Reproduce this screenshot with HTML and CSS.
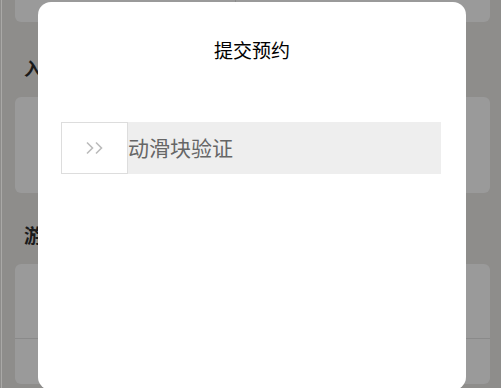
FILE: index.html
```html
<!DOCTYPE html>
<html lang="zh-CN">
<head>
<meta charset="utf-8">
<title>提交预约</title>
<link rel="stylesheet" href="styles.css">
</head>
<body>
<div class="page">
  <div class="card card-top">
    <div class="col"></div>
    <div class="col"></div>
  </div>
  <h2 class="heading heading-first">入</h2>
  <div class="card card-mid"></div>
  <h2 class="heading heading-second">游</h2>
  <div class="card card-bottom">
    <div class="row"></div>
    <div class="row"></div>
  </div>
</div>
<div class="edge-line"></div>
<div class="overlay">
  <div class="modal">
    <div class="modal-title">提交预约</div>
    <div class="slider">
      <div class="handle">
        <svg class="chevrons" width="20" height="14" viewBox="0 0 20 14">
          <path d="M2 1.5 L7.5 7 L2 12.5" fill="none" stroke="#bbbbbb" stroke-width="1.6"/>
          <path d="M11 1.5 L16.5 7 L11 12.5" fill="none" stroke="#bbbbbb" stroke-width="1.6"/>
        </svg>
      </div>
      <div class="slider-text">动滑块验证</div>
    </div>
  </div>
</div>
</body>
</html>
```
FILE: styles.css
```css
html, body {
  margin: 0;
  padding: 0;
  height: 100%;
  overflow: hidden;
}
body {
  background: #8e8d8b;
  font-family: "Noto Sans CJK SC", "Noto Sans", sans-serif;
}
.page {
  padding: 0 11px 0 15px;
}
.card {
  background: #9a9a9a;
  border-radius: 6px;
}
.card-top {
  margin-top: -40px;
  height: 62px;
  display: grid;
  grid-template-columns: 221px 1fr;
}
.card-top .col:first-child {
  border-right: 1px solid #8a8a8a;
  height: 42px;
}
.heading {
  margin: 0;
  padding-left: 9px;
  font-size: 18px;
  font-weight: 700;
  color: #1a1a1a;
  line-height: 26px;
}
.heading-first {
  margin-top: 33px;
}
.card-mid {
  margin-top: 16px;
  height: 96px;
}
.heading-second {
  margin-top: 29px;
  font-size: 19px;
}
.card-bottom {
  margin-top: 16px;
  height: 120px;
  display: flex;
  flex-direction: column;
}
.card-bottom .row:first-child {
  height: 74px;
  border-bottom: 1px solid #8a8a8a;
}
.edge-line {
  position: fixed;
  left: 1px;
  top: 0;
  width: 1px;
  height: 100%;
  background: #aaa9a7;
}
.overlay {
  position: fixed;
  left: 0;
  top: 0;
  width: 100%;
  height: 100%;
}
.modal {
  position: absolute;
  left: 38px;
  top: 2px;
  width: 428px;
  height: 388px;
  background: #fff;
  border-radius: 13px;
  display: flex;
  flex-direction: column;
  align-items: center;
}
.modal-title {
  margin-top: 34px;
  font-size: 19px;
  line-height: 28px;
  color: #000;
  text-align: center;
}
.slider {
  margin-top: 58px;
  margin-left: -2px;
  width: 380px;
  height: 52px;
  background: #eeeeee;
  display: flex;
  align-items: center;
}
.handle {
  box-sizing: border-box;
  width: 67px;
  height: 52px;
  background: #fff;
  border: 1px solid #dddddd;
  display: flex;
  align-items: center;
  justify-content: center;
}
.chevrons {
  display: block;
  margin-left: 0;
}
.slider-text {
  font-size: 21px;
  color: #666666;
  line-height: 52px;
  margin-top: -2px;
}
```
